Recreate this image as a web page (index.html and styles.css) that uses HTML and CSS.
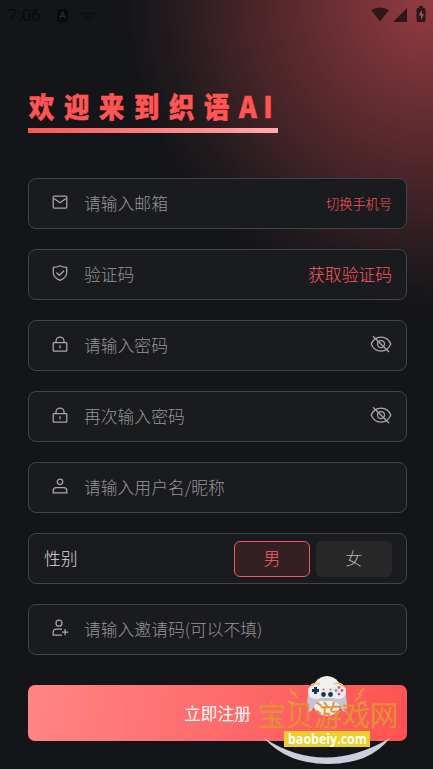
FILE: index.html
```html
<!DOCTYPE html>
<html lang="zh-CN">
<head>
<meta charset="utf-8">
<title>注册</title>
<link rel="stylesheet" href="styles.css">
</head>
<body>
<main class="screen">
  <header class="status">
    <span class="clock">7:06</span>
    <svg class="input-icon" width="11" height="13" viewBox="0 0 11 13"><rect width="11" height="13" rx="1.5" fill="#090a0c"/><path d="M2.800 9.500 5.500 3l2.700 6.500M3.900 7.400h3.200" fill="none" stroke="#292b2e" stroke-width="1.300"/></svg>
    <svg class="keyboard" width="16" height="9" viewBox="0 0 16 9" fill="none" stroke="#0b0c0e"><path d="M0 1.500h16M1 3.500h14M2 5.500h12" stroke-dasharray="2 .6"/><path d="M4 7.500h8"/></svg>
    <svg class="system" width="56" height="17" viewBox="0 0 56 17" fill="#2f1619"><path d="M1 4Q10-1 19 4L10 15.500Z"/><path d="M23 16 37 2v14Z"/><path d="M49 0h4v2h1q1.500 0 1.500 1.500v11q0 1.500-1.500 1.500h-6q-1.500 0-1.500-1.500v-11Q46.500 2 48 2h1Z"/><path d="m52 4-3.500 5.500H51V14l3-6h-2Z" fill="#99545a"/></svg>
  </header>
  <h1 class="title"><span class="title-text">欢迎来到织语<span class="latin">AI</span></span></h1>
  <form class="form">
    <div class="field">
      <svg class="icon" viewBox="0 0 16 16"><rect x="1.200" y="2" width="13.600" height="12" rx="1"/><path d="m2 4.500 6 4.300 6-4.300"/></svg>
      <span class="hint">请输入邮箱</span><span class="link small">切换手机号</span>
    </div>
    <div class="field">
      <svg class="icon" viewBox="0 0 16 16"><path d="M8 .7Q11 2.200 14.700 2.400V8q0 4.500-6.700 7.300Q1.300 12.500 1.300 8V2.400Q5 2.200 8 .7Z"/><path d="m4.500 7.500 2.800 2.800 4.700-4.600"/></svg>
      <span class="hint">验证码</span><span class="link">获取验证码</span>
    </div>
    <div class="field">
      <svg class="icon" viewBox="0 0 16 16"><rect x="1.200" y="6.500" width="13.600" height="8.700" rx=".8"/><path d="M4 6.500V5a4 4 0 0 1 8 0v1.500M8 9.300v3"/></svg>
      <span class="hint">请输入密码</span>
      <svg class="eye" viewBox="0 0 22 18"><path d="M1.200 9C3 4.500 6.500 2 11 2s8 2.500 9.800 7c-1.800 4.500-5.300 7-9.800 7S3 13.500 1.200 9Z"/><circle cx="11" cy="9" r="3.500"/><path d="M3 1.200 19 17"/></svg>
    </div>
    <div class="field">
      <svg class="icon" viewBox="0 0 16 16"><rect x="1.200" y="6.500" width="13.600" height="8.700" rx=".8"/><path d="M4 6.500V5a4 4 0 0 1 8 0v1.500M8 9.300v3"/></svg>
      <span class="hint">再次输入密码</span>
      <svg class="eye" viewBox="0 0 22 18"><path d="M1.200 9C3 4.500 6.500 2 11 2s8 2.500 9.800 7c-1.800 4.500-5.300 7-9.800 7S3 13.500 1.200 9Z"/><circle cx="11" cy="9" r="3.500"/><path d="M3 1.200 19 17"/></svg>
    </div>
    <div class="field">
      <svg class="icon" viewBox="0 0 16 16"><circle cx="8" cy="3.800" r="2.700"/><path d="M1.200 14.800v-2.300q0-3 3-3h7.600q3 0 3 3v2.300Z"/></svg>
      <span class="hint">请输入用户名/昵称</span>
    </div>
    <div class="field gender">
      <span class="label">性别</span>
      <span class="choices"><span class="choice selected">男</span><span class="choice">女</span></span>
    </div>
    <div class="field">
      <svg class="icon invite" viewBox="0 0 16 18"><circle cx="7" cy="4.200" r="3"/><path d="M10 10H4.500q-3.300 0-3.300 3.500V16H10M10 13h6.200M13.100 10v6.200"/></svg>
      <span class="hint">请输入邀请码(可以不填)</span>
    </div>
  </form>
  <div class="submit">立即注册</div>
  <svg class="watermark" width="150" height="94" viewBox="0 0 150 94">
    <ellipse cx="70" cy="26" rx="16" ry="20" fill="#f3f1ee"/>
    <path d="M52 22q-3 11-1.500 18 1 3 4 1 3-8 9-10h13q6 2 9 10 3 2 4-1 1.500-7-1.500-18Z" fill="#c5c4d0"/>
    <path d="M51 21q0-6 8-6 6 0 7 3h8q1-3 7-3 8 0 8 6 0 8-8 8-3 0-5-1H64q-2 1-5 1-8 0-8-8Z" fill="#eeedf2"/>
    <path d="M58.500 17v7M55 20.500h7" stroke="#17384a" stroke-width="3"/>
    <path d="M54 15q4-3 9-1M77 14q5-2 9 1" fill="none" stroke="#e8c568" stroke-width="1.400"/>
    <circle cx="66.500" cy="24.500" r="2.400" fill="#17384a"/><circle cx="73.500" cy="24.500" r="2.400" fill="#17384a"/>
    <circle cx="82" cy="17.500" r="1.400" fill="#e45768"/><circle cx="82" cy="24" r="1.400" fill="#e45768"/><circle cx="79" cy="20.500" r="1.400" fill="#56aaca"/><circle cx="85" cy="20.500" r="1.400" fill="#e45768"/>
    <circle cx="66.500" cy="19.500" r="1" fill="#e45768"/><circle cx="73.500" cy="19.500" r="1" fill="#e45768"/>
    <path d="m33 18 3 6 1-1 4 6M31 31l3 2 1-1 3 3M107 18l-5 6 2 1-6 6M109 31l-3 2-1-1-3 3" fill="none" stroke="#efa03c" stroke-width="1.500"/>
    <path d="M7 68Q67 107 133 68 113 94 71 94 30 94 7 68Z" fill="#cccddd"/>
    <text class="brand" x="1" y="56">宝贝游戏网</text>
    <rect x="27" y="61" width="86" height="16" fill="#ecd027"/>
    <text class="domain" x="31" y="74" textLength="79" lengthAdjust="spacingAndGlyphs">baobeiy.com</text>
  </svg>
</main>
</body>
</html>
```
FILE: styles.css
```css
* { box-sizing: border-box; }
body {
  margin: 0;
  background: #141519;
  font-family: "Noto Sans CJK SC", sans-serif;
}
.screen {
  position: relative;
  width: 433px;
  height: 769px;
  overflow: hidden;
  padding: 0 26px 0 28px;
  background: radial-gradient(circle 310px at 433px 0, #953c41 0%, #5e2b2f 42%, #3f2226 66%, #211a1d 86%, #141519 100%);
}
.status {
  height: 30px;
  margin: 0 -20px;
  display: flex;
  align-items: center;
}
.clock {
  width: 49px;
  font: 17px/30px Roboto, sans-serif;
  color: #090a0c;
}
.keyboard { margin-left: 13px; }
.system { margin: -2px 1px 0 auto; }
.title {
  width: 250px;
  height: 51px;
  margin: 52px 0 45px;
  border-bottom: 5px solid;
  border-image: linear-gradient(90deg, #ff5555, #ffaaaa) 1;
  font-size: 28px;
  line-height: 49px;
  font-weight: 900;
  color: #ff5555;
  white-space: nowrap;
}
.title-text {
  display: inline-block;
  transform: translateX(1px) scaleX(.9);
  transform-origin: left;
  letter-spacing: 10.900px;
  -webkit-text-stroke: .6px #ff5555;
}
.latin { letter-spacing: 7px; font-size: 30px; line-height: 1; }
.form {
  display: grid;
  grid-auto-rows: 51px;
  gap: 20px;
}
.field {
  display: flex;
  align-items: center;
  padding: 0 14px 2px 23px;
  border: 1px solid #434449;
  border-radius: 8px;
  background: #1a1b1e;
  font-size: 16.800px;
  line-height: 24px;
}
.icon, .eye {
  flex: none;
  fill: none;
  stroke: #a8a8a8;
  stroke-width: 1.250;
}
.icon { width: 16px; height: 16px; margin: -1px 16px 0 0; }
.icon.invite { height: 18px; overflow: visible; }
.eye { width: 22px; height: 18px; margin: -2px 0 0 auto; }
.hint { color: #969697; font-weight: 300; }
.link { margin-left: auto; color: #ff5a5c; font-weight: 300; }
.small { margin-top: 2px; font-size: 13.200px; }
.gender { padding: 0 14px 0 15px; }
.label { margin-top: -1px; color: #dcdcdd; font-weight: 300; }
.choices { display: flex; gap: 6px; margin-left: auto; }
.choice {
  width: 76px;
  height: 36px;
  border-radius: 6px;
  background: #272727;
  color: #b8b8b8;
  text-align: center;
  line-height: 34px;
  font-weight: 300;
}
.selected {
  border: 1px solid #f15a59;
  background: #322023;
  color: #ff6262;
  line-height: 32px;
}
.submit {
  height: 56px;
  margin-top: 30px;
  border-radius: 7px;
  background: linear-gradient(100deg, #ff8585, #ff5252);
  color: #fff;
  text-align: center;
  font-size: 16.700px;
  line-height: 56px;
}
.watermark {
  position: absolute;
  left: 257px;
  top: 670px;
}
.brand {
  font-size: 28px;
  font-weight: 300;
  fill: #ed8f0c;
  stroke: #d99a45;
  stroke-width: .6px;
}
.domain {
  font: bold 14px "Open Sans", sans-serif;
  fill: #fff;
}
```
